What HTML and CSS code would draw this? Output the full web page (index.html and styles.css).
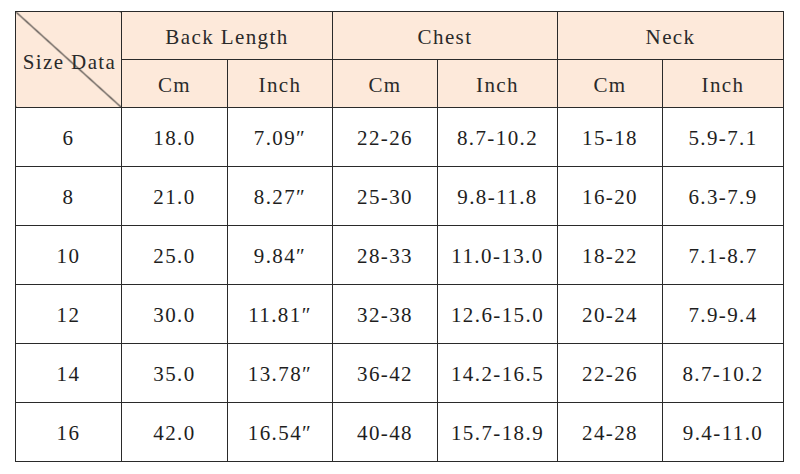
FILE: index.html
```html
<!DOCTYPE html>
<html>
<head>
<meta charset="utf-8">
<link rel="stylesheet" href="styles.css">
</head>
<body>
<table class="size-table">
  <colgroup>
    <col class="c1"><col class="c2"><col class="c3"><col class="c4"><col class="c5"><col class="c6"><col class="c7">
  </colgroup>
  <thead>
    <tr class="h1">
      <th rowspan="2" class="corner">Size Data</th>
      <th colspan="2">Back Length</th>
      <th colspan="2">Chest</th>
      <th colspan="2">Neck</th>
    </tr>
    <tr class="h2">
      <th>Cm</th><th>Inch</th><th>Cm</th><th>Inch</th><th>Cm</th><th>Inch</th>
    </tr>
  </thead>
  <tbody>
    <tr><td>6</td><td>18.0</td><td>7.09″</td><td>22-26</td><td>8.7-10.2</td><td>15-18</td><td>5.9-7.1</td></tr>
    <tr><td>8</td><td>21.0</td><td>8.27″</td><td>25-30</td><td>9.8-11.8</td><td>16-20</td><td>6.3-7.9</td></tr>
    <tr><td>10</td><td>25.0</td><td>9.84″</td><td>28-33</td><td>11.0-13.0</td><td>18-22</td><td>7.1-8.7</td></tr>
    <tr><td>12</td><td>30.0</td><td>11.81″</td><td>32-38</td><td>12.6-15.0</td><td>20-24</td><td>7.9-9.4</td></tr>
    <tr><td>14</td><td>35.0</td><td>13.78″</td><td>36-42</td><td>14.2-16.5</td><td>22-26</td><td>8.7-10.2</td></tr>
    <tr><td>16</td><td>42.0</td><td>16.54″</td><td>40-48</td><td>15.7-18.9</td><td>24-28</td><td>9.4-11.0</td></tr>
  </tbody>
</table>
</body>
</html>
```

FILE: styles.css
```css
html, body {
  margin: 0;
  padding: 0;
  background: #ffffff;
}

.size-table {
  margin: 11px 0 0 15px;
  width: 768px;
  table-layout: fixed;
  border-collapse: collapse;
  font-family: "Liberation Serif", "Times New Roman", serif;
  font-size: 21px;
  letter-spacing: 1.4px;
  color: #1e1e1e;
}

.c1 { width: 106px; }
.c2 { width: 106px; }
.c3 { width: 105px; }
.c4 { width: 105px; }
.c5 { width: 120px; }
.c6 { width: 105px; }
.c7 { width: 121px; }

.size-table th,
.size-table td {
  border: 1px solid #2a2a2a;
  text-align: center;
  vertical-align: middle;
  padding: 0;
  font-weight: normal;
}

.size-table th {
  background: #fde9da;
  color: #2a2a2a;
}

.h1 th {
  height: 43px;
  padding-top: 4px;
}

.h2 th {
  height: 44px;
  padding-top: 3px;
}

.size-table th.corner {
  padding: 6px 0 0 2px;
  background:
    linear-gradient(to top right,
      transparent calc(50% - 1px),
      #222222 50%,
      transparent calc(50% + 1px)),
    #fde9da;
}

.size-table td {
  height: 56px;
  padding-top: 2px;
}
```
